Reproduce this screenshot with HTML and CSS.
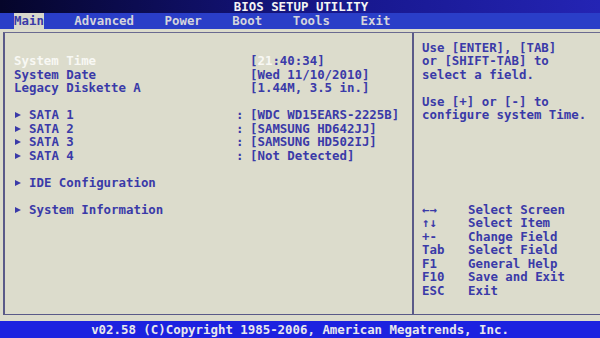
FILE: index.html
```html
<!DOCTYPE html>
<html>
<head>
    <title>BIOS Setup Utility</title>
    <link rel="stylesheet" href="styles.css">
</head>
<body>
    <div class="title">BIOS SETUP UTILITY</div>
    <div class="menu">
        <span class="active">Main</span>
        <span>Advanced</span>
        <span>Power</span>
        <span>Boot</span>
        <span>Tools</span>
        <span>Exit</span>
    </div>

    <div class="panel">
        <div class="left">
            <div class="row gap"><span class="label selected">System Time</span><span class="sep"></span><span>[<span class="cursor">21</span>:40:34]</span></div>
            <div class="row"><span class="label">System Date</span><span class="sep"></span><span>[Wed 11/10/2010]</span></div>
            <div class="row"><span class="label">Legacy Diskette A</span><span class="sep"></span><span>[1.44M, 3.5 in.]</span></div>

            <div class="row gap"><span class="label"><i></i>SATA 1</span><span class="sep">:</span><span>[WDC WD15EARS-2225B]</span></div>
            <div class="row"><span class="label"><i></i>SATA 2</span><span class="sep">:</span><span>[SAMSUNG HD642JJ]</span></div>
            <div class="row"><span class="label"><i></i>SATA 3</span><span class="sep">:</span><span>[SAMSUNG HD502IJ]</span></div>
            <div class="row"><span class="label"><i></i>SATA 4</span><span class="sep">:</span><span>[Not Detected]</span></div>

            <div class="row gap"><span class="label"><i></i>IDE Configuration</span></div>
            <div class="row gap"><span class="label"><i></i>System Information</span></div>
        </div>

        <div class="right">
            <div class="help">
                <div>Use [ENTER], [TAB]</div>
                <div>or [SHIFT-TAB] to</div>
                <div>select a field.</div>
                <div class="gap">Use [+] or [-] to</div>
                <div>configure system Time.</div>
            </div>

            <div class="keys">
                <div class="key"><span>&larr;&rarr;</span>Select Screen</div>
                <div class="key"><span>&uarr;&darr;</span>Select Item</div>
                <div class="key"><span>+-</span>Change Field</div>
                <div class="key"><span>Tab</span>Select Field</div>
                <div class="key"><span>F1</span>General Help</div>
                <div class="key"><span>F10</span>Save and Exit</div>
                <div class="key"><span>ESC</span>Exit</div>
            </div>
        </div>
    </div>

    <div class="footer">v02.58 (C)Copyright 1985-2006, American Megatrends, Inc.</div>
</body>
</html>
```

FILE: styles.css
```css
body {
    margin: 0;
    width: 600px;
    height: 338px;
    overflow: hidden;
    background-color: #dcdccc;
    font-family: "DejaVu Sans Mono", "Liberation Mono", monospace;
    font-size: 12.4px;
    font-weight: bold;
    line-height: 13.5px;
    color: #3a3aa8;
}
.title {
    height: 13px;
    line-height: 14px;
    text-align: center;
    color: #f4f4f4;
    background: linear-gradient(to right, #05052a, #16168a 55%, #2424b4);
    padding-left: 2px;
}
.menu {
    display: flex;
    gap: 30.5px;
    height: 16px;
    align-items: center;
    padding-left: 14px;
    background-color: #2a3ec8;
    color: #d4d4dc;
}
.menu span {
    padding: 1px 0;
}
.menu .active {
    background-color: #d8d8cc;
    color: #3a3aa8;
}
.panel {
    display: flex;
    box-sizing: border-box;
    height: 283px;
    margin: 3px 0 0 3px;
    border-top: 1px solid #6a6a90;
    border-left: 2px solid #5a5a88;
    border-bottom: 1px solid #5a5a88;
}
.left {
    width: 398px;
    padding: 7.5px 0 0 9px;
    border-right: 2px solid #5a5a88;
}
.row {
    display: flex;
    height: 13.5px;
}
.gap {
    margin-top: 13.5px;
}
.label {
    width: 222px;
}
.label i {
    display: inline-block;
    width: 0;
    height: 0;
    margin: 0 8px 1px 1px;
    border-left: 6px solid #3a3aa8;
    border-top: 3.5px solid transparent;
    border-bottom: 3.5px solid transparent;
}
.selected, .cursor {
    color: #f8f8f4;
}
.sep {
    width: 14px;
}
.right {
    flex: 1;
    padding: 7.5px 0 0 8px;
}
.keys {
    margin-top: 81px;
}
.key span {
    display: inline-block;
    width: 46px;
}
.footer {
    height: 17px;
    margin-top: 6px;
    line-height: 17px;
    text-align: center;
    background-color: #1c22e0;
    color: #e8e8ec;
}
```
